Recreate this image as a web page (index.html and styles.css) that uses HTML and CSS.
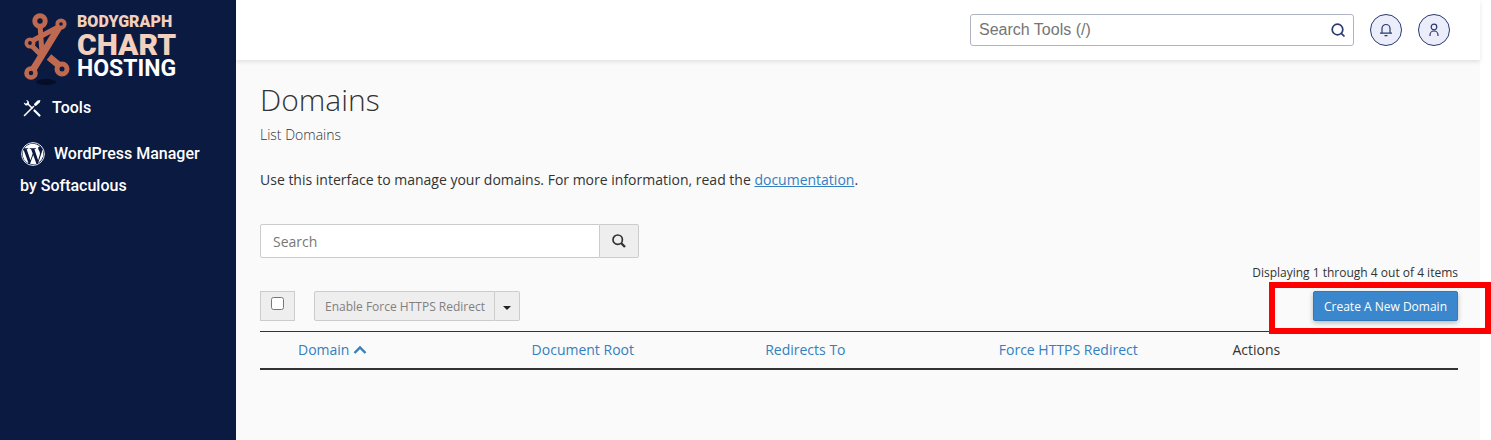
FILE: index.html
```html
<!DOCTYPE html>
<html lang="en">
<head>
  <meta charset="UTF-8" />
  <meta name="viewport" content="width=device-width, initial-scale=1" />
  <title>Domains</title>
  <link rel="stylesheet" href="styles.css">
</head>
<body>
  <div class="layout">
    <!-- SIDEBAR -->
    <aside class="sidebar">
      <a class="logo" href="#">
        <svg class="logo-mark" viewBox="0 0 46 76" width="46" height="76" aria-hidden="true">
          <ellipse cx="22" cy="72" rx="10" ry="3" fill="#050d28" />
          <g fill="none" stroke="#bf6a50" stroke-linecap="round">
            <path d="M16 15l2 28" stroke-width="5" />
            <path d="M6 32l30-16M6 34l11 11" stroke-width="5" />
            <path d="M37 14L7 63" stroke-width="7" />
            <path d="M25 47l12 10" stroke-width="7" stroke-linecap="butt" />
          </g>
          <g fill="#0a1a40" stroke="#bf6a50">
            <circle cx="16" cy="11" r="5.200" stroke-width="5" />
            <circle cx="37" cy="14" r="3.700" stroke-width="3.800" />
            <circle cx="6" cy="33" r="3.700" stroke-width="3.600" />
            <circle cx="7" cy="63" r="4.500" stroke-width="4.600" />
            <circle cx="38" cy="59" r="5" stroke-width="5" />
          </g>
        </svg>
        <span class="logo-text">
          <span class="logo-top">BODYGRAPH</span>
          <span class="logo-mid">CHART</span>
          <span class="logo-low">HOSTING</span>
        </span>
      </a>
      <nav class="menu">
        <a class="menu-item" href="#">
          <svg class="tools-icon" viewBox="0 0 20 20" width="20" height="20" aria-hidden="true">
            <path d="M5.500 5.500l5 5" stroke="#fff" stroke-width="1.600" />
            <path d="M12.500 12.500l5 5" stroke="#fff" stroke-width="2.200" stroke-linecap="round" />
            <path d="M2.500 17.500l9-9" stroke="#fff" stroke-width="1.600" stroke-linecap="round" />
            <path d="M18.500 2l-3 .5-3.500 3.500.3 1.600 1.600.3 3.800-3.400z" fill="#fff" />
            <path d="M1.800 4.200a3 3 0 0 0 4.400 2.900 3 3 0 0 0-2.200-5.100l1.500 1.900-.8 1.400-1.500.2z" fill="#fff" />
          </svg>Tools
        </a>
        <a class="menu-item" href="#">
          <svg class="wp-icon" viewBox="0 0 16 16" width="24" height="24" fill="#fff" aria-hidden="true">
            <path d="M12.633 7.653c0-.848-.305-1.435-.566-1.892l-.08-.13c-.317-.51-.594-.958-.594-1.48 0-.63.478-1.218 1.152-1.218q.03 0 .058.003l.031.003A6.84 6.84 0 0 0 8 1.137 6.86 6.86 0 0 0 2.266 4.23c.16.005.313.009.442.009.717 0 1.828-.087 1.828-.087.37-.022.414.521.044.565 0 0-.371.044-.785.065l2.5 7.434 1.5-4.506-1.070-2.929c-.369-.022-.719-.065-.719-.065-.37-.022-.326-.588.043-.566 0 0 1.134.087 1.808.087.718 0 1.830-.087 1.830-.087.37-.022.413.522.043.566 0 0-.372.043-.785.065l2.480 7.377.684-2.287.054-.173c.27-.86.469-1.495.469-2.046zM1.137 8a6.860 6.860 0 0 0 3.868 6.176L1.730 5.206A6.800 6.800 0 0 0 1.137 8" />
            <path d="M6.061 14.583 8.121 8.6l2.109 5.780q.02.05.049.094a6.850 6.850 0 0 1-4.218.109m7.960-9.876q.046.328.047.706c0 .696-.13 1.479-.522 2.458l-2.096 6.060a6.860 6.860 0 0 0 2.572-9.224z" />
            <circle cx="8" cy="8" r="7.6" fill="none" stroke="#fff" stroke-width=".6" />
          </svg>WordPress Manager by Softaculous
        </a>
      </nav>
    </aside>

    <div class="page">
      <!-- TOP BAR -->
      <header class="topbar">
        <div class="tool-search">
          <input type="text" aria-label="Search tools" placeholder="Search Tools (/)" />
          <button class="tool-search-btn" aria-label="Search">
            <svg viewBox="0 0 16 16" width="16" height="16" fill="none" stroke="#293a70" stroke-width="1.700">
              <circle cx="7.500" cy="7.500" r="5.300" />
              <path d="M11.300 11.300l3.200 3.200" />
            </svg>
          </button>
        </div>
        <button class="round-btn" aria-label="Notifications">
          <svg viewBox="0 0 14 14" width="14" height="14" fill="none" stroke="#293a70" stroke-width="1.200">
            <path d="M3 10V5.500a4 4 0 0 1 8 0V10M1 10.200h12M5.500 12.700h3" />
          </svg>
        </button>
        <button class="round-btn" aria-label="Account">
          <svg viewBox="0 0 14 14" width="14" height="14" fill="none" stroke="#293a70" stroke-width="1.200">
            <circle cx="7" cy="4" r="2.800" />
            <path d="M3 13v-1a4 4 0 0 1 8 0v1" />
          </svg>
        </button>
      </header>

      <!-- CONTENT -->
      <main class="content">
        <h1>Domains</h1>
        <p class="subtitle">List Domains</p>
        <p class="intro">Use this interface to manage your domains. For more information, read the <a href="#">documentation</a>.</p>

        <div class="search-group">
          <input type="text" aria-label="Search domains" placeholder="Search" />
          <button aria-label="Search">
            <svg viewBox="0 0 14 14" width="14" height="14" fill="none" stroke="#333">
              <circle cx="5.700" cy="5.700" r="4.700" stroke-width="1.700" />
              <path d="M9 9l4 4" stroke-width="2.400" />
            </svg>
          </button>
        </div>

        <p class="item-count">Displaying 1 through 4 out of 4 items</p>

        <div class="toolbar">
          <label class="select-all"><input type="checkbox" aria-label="Select all domains" /></label>
          <div class="btn-group">
            <button class="redirect-btn" disabled>Enable Force HTTPS Redirect</button>
            <button class="caret-btn" aria-label="More actions"><span class="caret"></span></button>
          </div>
          <div class="create-wrap">
            <button class="create-btn">Create A New Domain</button>
            <div class="highlight"></div>
          </div>
        </div>

        <table class="domains">
          <thead>
            <tr>
              <td class="check-col"></td>
              <th><a href="#">Domain <svg viewBox="0 0 14 10" width="14" height="10" fill="none" stroke="#337fc0" stroke-width="2.400" aria-hidden="true"><path d="M1.500 8L7 2.500 12.500 8" /></svg></a></th>
              <th><a href="#">Document Root</a></th>
              <th><a href="#">Redirects To</a></th>
              <th><a href="#">Force HTTPS Redirect</a></th>
              <th>Actions</th>
            </tr>
          </thead>
        </table>
      </main>
    </div>
  </div>
</body>
</html>
```
FILE: styles.css
```css
* {
  box-sizing: border-box;
}
body {
  margin: 0;
  padding-right: 11px;
  background: #fff;
  color: #333;
  font-family: "Open Sans", "Noto Sans", sans-serif;
  font-size: 14px;
  line-height: 20px;
}
h1, p {
  margin: 0;
}
button, input {
  font-family: inherit;
  margin: 0;
}
button {
  padding: 0;
  cursor: pointer;
}
.layout {
  display: flex;
  min-height: 100vh;
}

/* Sidebar */
.sidebar {
  width: 236px;
  flex-shrink: 0;
  background: #0a1a40;
}
.logo {
  display: flex;
  gap: 7px;
  padding: 10px 0 0 24px;
  text-decoration: none;
  font-family: Roboto, sans-serif;
}
.logo-text {
  display: flex;
  flex-direction: column;
  padding-top: 4px;
  font-weight: 700;
  color: #f2d0bd;
}
.logo-top {
  font-size: 16px;
  line-height: 16px;
  font-weight: 900;
}
.logo-mid {
  font-size: 30px;
  line-height: 29px;
  font-weight: 900;
}
.logo-low {
  font-size: 23px;
  line-height: 20px;
  color: #fff;
}
.menu {
  display: flex;
  flex-direction: column;
  gap: 14px;
  padding: 6px 20px;
}
.menu-item {
  color: #fff;
  font-family: Roboto, sans-serif;
  font-size: 16px;
  font-weight: 500;
  line-height: 32px;
  text-decoration: none;
}
.menu-item svg {
  vertical-align: -5px;
}
.menu-item .wp-icon {
  vertical-align: -7px;
}
.tools-icon {
  margin: 0 10px 0 2px;
}
.wp-icon {
  margin: 0 9px 0 1px;
}

/* Top bar */
.page {
  flex: 1;
  background: #fafafa;
}
.topbar {
  display: flex;
  justify-content: flex-end;
  align-items: center;
  gap: 16px;
  height: 60px;
  padding-right: 30px;
  background: #fff;
  box-shadow: 0 2px 4px rgba(0, 0, 0, 0.1);
}
.tool-search {
  display: flex;
  width: 384px;
  height: 32px;
  border: 1px solid #b0b4c0;
  border-radius: 3px;
  background: #fff;
}
.tool-search input {
  flex: 1;
  border: none;
  background: none;
  padding: 0 8px;
  font-family: "Liberation Sans", Arial, sans-serif;
  font-size: 16px;
}
.tool-search input::placeholder {
  color: #757575;
}
.tool-search-btn {
  display: flex;
  align-items: center;
  justify-content: center;
  width: 30px;
  border: none;
  background: none;
}
.round-btn {
  display: flex;
  align-items: center;
  justify-content: center;
  width: 32px;
  height: 32px;
  border: 1px solid #293a70;
  border-radius: 50%;
  background: #ebedfa;
}

/* Content */
.content {
  padding: 20px 22px 20px 24px;
}
h1 {
  font-size: 30px;
  font-weight: 300;
  line-height: 40px;
}
.subtitle {
  margin-top: 5px;
  font-weight: 300;
}
.intro {
  margin-top: 25px;
}
a {
  color: #337fc0;
}
.search-group {
  display: flex;
  width: 379px;
  height: 34px;
  margin-top: 34px;
}
.search-group input {
  flex: 1;
  border: 1px solid #ccc;
  border-radius: 2px 0 0 2px;
  padding: 0 12px;
  font-size: 14px;
}
.search-group input::placeholder {
  color: #777;
}
.search-group button {
  display: flex;
  align-items: center;
  justify-content: center;
  width: 39px;
  border: 1px solid #ccc;
  border-left: none;
  border-radius: 0 2px 2px 0;
  background: #eee;
}
.item-count {
  margin-top: 5px;
  font-size: 12px;
  text-align: right;
}
.toolbar {
  display: flex;
  height: 30px;
  margin-top: 8px;
}
.select-all {
  display: flex;
  justify-content: center;
  width: 35px;
  margin-right: 19px;
  padding-top: 5px;
  border: 1px solid #ccc;
  background: #eee;
}
.select-all input {
  width: 13px;
  height: 13px;
}
.btn-group {
  display: flex;
}
.btn-group button {
  border: 1px solid #ccc;
  background: #eee;
  font-size: 12px;
}
.btn-group .redirect-btn {
  padding: 0 9px 0 10px;
  border-radius: 2px 0 0 2px;
  color: #808080;
}
.btn-group .caret-btn {
  display: flex;
  align-items: center;
  justify-content: center;
  width: 25px;
  border-left: none;
  border-radius: 0 2px 2px 0;
}
.caret {
  margin-top: 3px;
  border-top: 4px solid #222;
  border-left: 4px solid transparent;
  border-right: 4px solid transparent;
}
.create-wrap {
  display: flex;
  position: relative;
  margin-left: auto;
}
.create-btn {
  padding: 0 10px;
  border: 1px solid #337ab7;
  border-radius: 2px;
  background: #3a87cd;
  color: #fff;
  font-size: 12px;
  font-weight: 500;
  box-shadow: 0 2px 5px rgba(0, 0, 0, 0.26);
}
/* red frame drawn over the create button */
.highlight {
  position: absolute;
  top: -9px;
  right: -33px;
  bottom: -13px;
  left: -44px;
  border: 6px solid #f00;
  pointer-events: none;
}

.domains {
  width: 100%;
  margin-top: 10px;
  table-layout: fixed;
  border-collapse: collapse;
  border-top: 1px solid #333;
  border-bottom: 2px solid #333;
}
.domains th {
  padding: 8px;
  font-weight: 400;
  text-align: left;
}
.domains .check-col {
  width: 30px;
  padding: 0;
}
.domains a {
  text-decoration: none;
}
```
